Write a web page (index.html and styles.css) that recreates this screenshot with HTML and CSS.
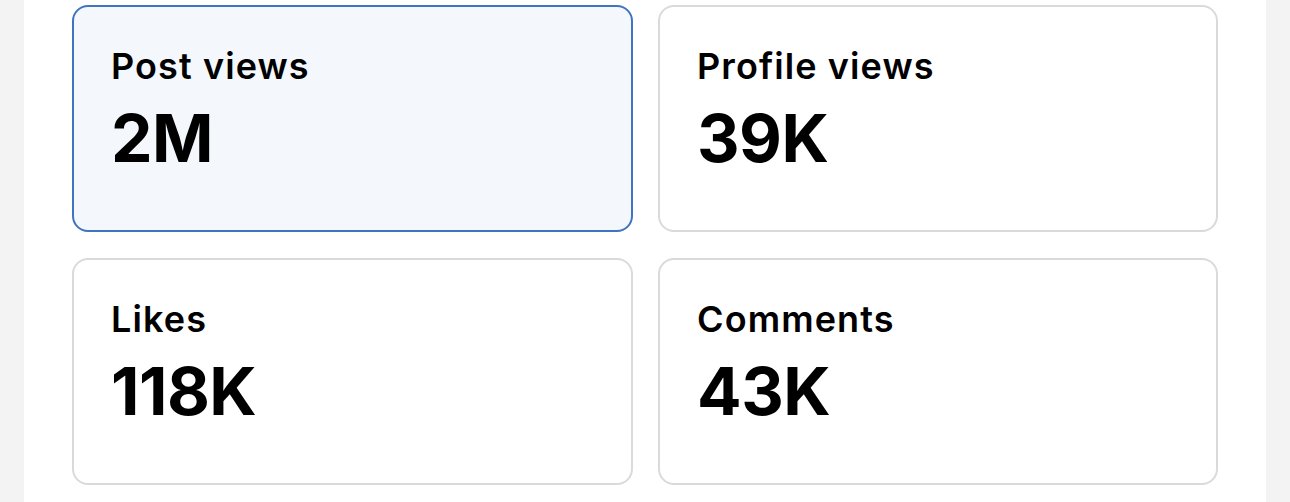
FILE: index.html
```html
<!DOCTYPE html>
<html lang="en">
<head>
<meta charset="utf-8">
<title>Stats</title>
<link rel="stylesheet" href="styles.css">
</head>
<body>
<main class="panel">
  <section class="grid">
    <div class="card card-active">
      <div class="label">Post views</div>
      <div class="value">2M</div>
    </div>
    <div class="card">
      <div class="label">Profile views</div>
      <div class="value">39K</div>
    </div>
    <div class="card">
      <div class="label">Likes</div>
      <div class="value">118K</div>
    </div>
    <div class="card">
      <div class="label">Comments</div>
      <div class="value">43K</div>
    </div>
  </section>
</main>
</body>
</html>
```
FILE: styles.css
```css
html, body {
  margin: 0;
  padding: 0;
  height: 100%;
}
body {
  background: #f3f3f3;
  font-family: Inter, "Noto Sans", "Liberation Sans", sans-serif;
  color: #000;
}
.panel {
  margin: 0 24px;
  background: #ffffff;
  min-height: 100%;
  padding: 5px 48px 0;
  box-sizing: border-box;
}
.grid {
  display: grid;
  grid-template-columns: 561px 560px;
  grid-auto-rows: 227px;
  column-gap: 25px;
  row-gap: 26px;
}
.card {
  border: 2px solid #dadada;
  border-radius: 16px;
  background: #ffffff;
  padding: 41px 37px 0;
  box-sizing: border-box;
  display: flex;
  flex-direction: column;
}
.card-active {
  border-color: #3f74c2;
  background: #f4f8fc;
}
.label {
  font-size: 36px;
  line-height: 1;
  font-weight: 600;
  letter-spacing: 1.1px;
}
.value {
  margin-top: 21px;
  font-size: 66px;
  line-height: 1;
  font-weight: 700;
  letter-spacing: -0.5px;
}
```
